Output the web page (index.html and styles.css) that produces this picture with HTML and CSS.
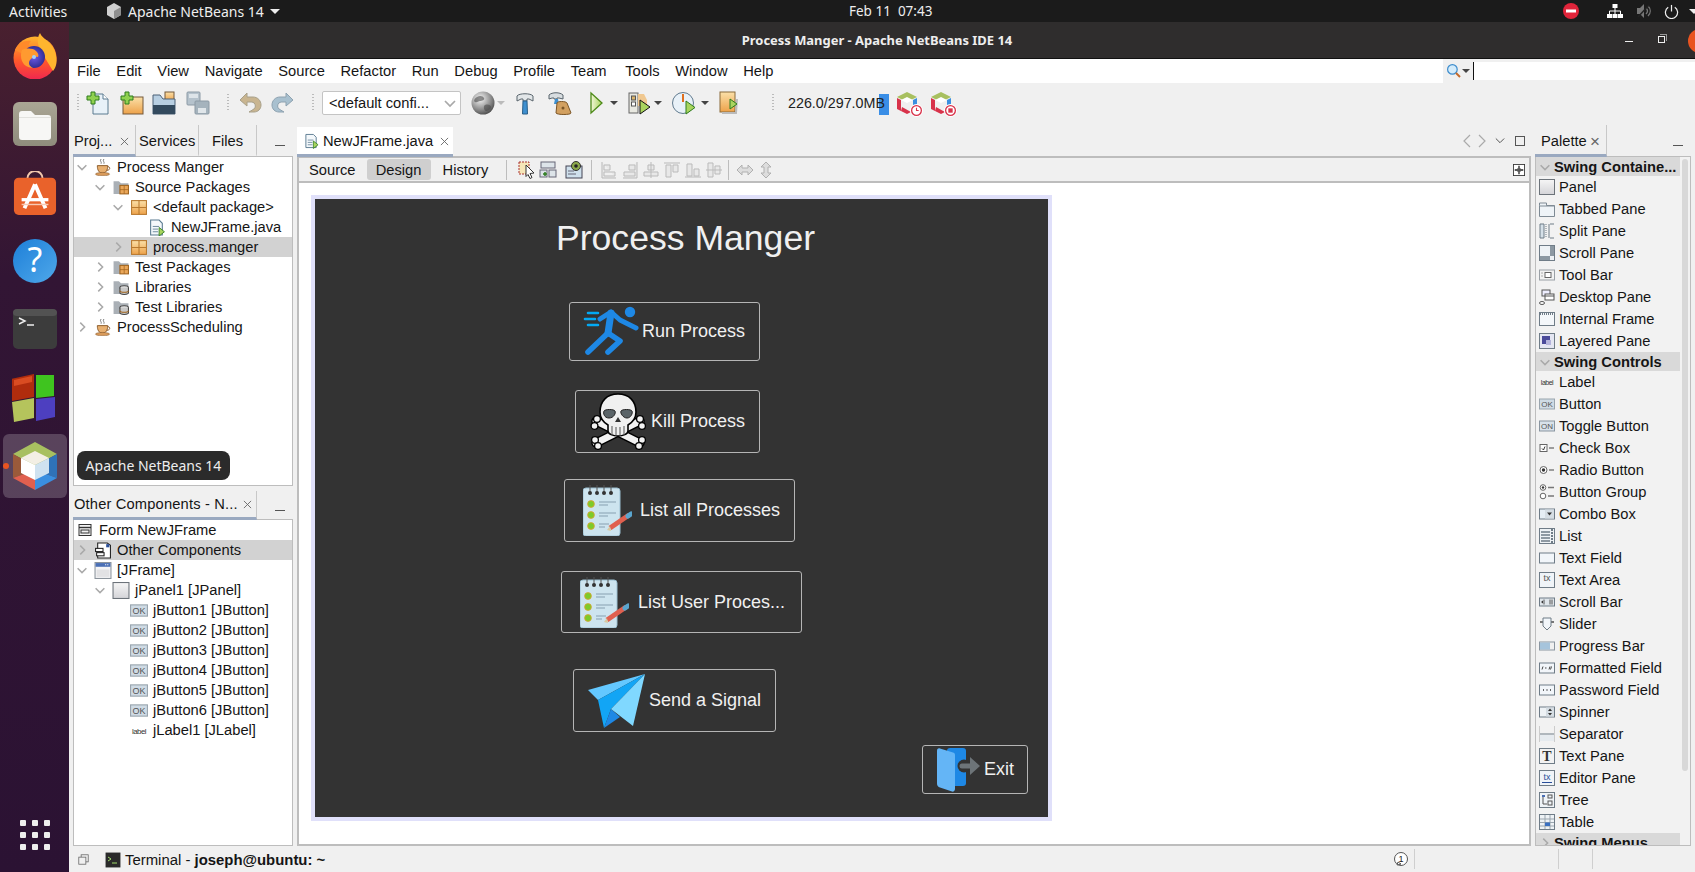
FILE: index.html
```html
<!DOCTYPE html>
<html lang="en">
<head>
<meta charset="utf-8">
<title>Process Manger - Apache NetBeans IDE 14</title>
<link rel="stylesheet" href="styles.css">
</head>
<body>
<svg class="sprite" aria-hidden="true">
<defs>
<linearGradient id="gFox" x1="0" y1="0" x2="0" y2="1"><stop offset="0" stop-color="#ffb52e"/><stop offset=".55" stop-color="#ff5a2a"/><stop offset="1" stop-color="#f0274f"/></linearGradient>
<radialGradient id="gFoxB" cx=".5" cy=".5" r=".55"><stop offset="0" stop-color="#6f5be8"/><stop offset="1" stop-color="#2c2a8c"/></radialGradient>
<linearGradient id="gFiles" x1="0" y1="0" x2="0" y2="1"><stop offset="0" stop-color="#aaa695"/><stop offset="1" stop-color="#8f8c7c"/></linearGradient>
<linearGradient id="gHelp" x1="0" y1="0" x2="1" y2="1"><stop offset="0" stop-color="#1d7fd8"/><stop offset="1" stop-color="#4fa8ea"/></linearGradient>
<linearGradient id="gOrange" x1="0" y1="0" x2="0" y2="1"><stop offset="0" stop-color="#fbe0a8"/><stop offset="1" stop-color="#eda24a"/></linearGradient>
<radialGradient id="gGlobe" cx=".38" cy=".32" r=".8"><stop offset="0" stop-color="#f6f6f6"/><stop offset=".6" stop-color="#8a8a8a"/><stop offset="1" stop-color="#3a3a3a"/></radialGradient>
<linearGradient id="gPanel" x1="0" y1="0" x2="0" y2="1"><stop offset="0" stop-color="#f6f6f6"/><stop offset="1" stop-color="#d4d4d8"/></linearGradient>
<linearGradient id="gRunF" x1="0" y1="0" x2="1" y2="0"><stop offset="0" stop-color="#f2f6d8"/><stop offset="1" stop-color="#a9d45e"/></linearGradient>
<symbol id="i-firefox" viewBox="0 0 46 46"><circle cx="23" cy="25" r="21.500" fill="url(#gFox)"/><path d="M28 0c2 6 14 10 16 22 2 8-1 14-3 16L30 20C26 14 24 6 28 0z" fill="#ffb52e"/><path d="M3 17c3-7 10-10 16-9-2 2-3 4-2 6l-8 6z" fill="#ff8a2a"/><circle cx="22" cy="24" r="11" fill="url(#gFoxB)"/><path d="M10 17c4-2 11-2 14 1 2 2 3 4 2 6-3-1-6 0-8 3-2 3-1 6 3 8-7 0-12-5-12-12 0-2 0-4 1-6z" fill="#ff9a30"/><circle cx="22" cy="24" r="2" fill="#9fd0ff"/></symbol>
<symbol id="i-files" viewBox="0 0 44 44"><rect width="44" height="44" rx="6" fill="url(#gFiles)"/><path d="M6 12a3 3 0 0 1 3-3h9l4 4h13a3 3 0 0 1 3 3v19a3 3 0 0 1-3 3H9a3 3 0 0 1-3-3z" fill="#f7f7f5"/><path d="M6 15h32v1H6z" fill="#e2e2de"/></symbol>
<symbol id="i-soft" viewBox="0 0 44 46"><path d="M14 12V8a8 8 0 0 1 16 0v4" fill="none" stroke="#f2c8ad" stroke-width="2"/><rect y="7" width="44" height="39" rx="5" fill="#e9622b"/><path d="M22 14 11 39M22 14l11 25" stroke="#fff" stroke-width="4" fill="none"/><path d="M8 30h28" stroke="#fff" stroke-width="3.400"/><path d="M8 35h28" stroke="#f7c9b4" stroke-width="1.500"/></symbol>
<symbol id="i-help" viewBox="0 0 44 44"><circle cx="22" cy="22" r="22" fill="url(#gHelp)"/><text x="22" y="33" text-anchor="middle" class="svg-q">?</text></symbol>
<symbol id="i-term" viewBox="0 0 44 40"><rect width="44" height="40" rx="5" fill="#3c3c3c"/><rect width="44" height="7" rx="4" fill="#525252"/><path d="M6 9l6 3-6 3" fill="none" stroke="#eee" stroke-width="1.500"/><path d="M14 16h7" stroke="#eee" stroke-width="1.500"/></symbol>
<symbol id="i-rubik" viewBox="2 0 46 48"><path d="M1 5 24 0v23L2 27z" fill="#b02c0d"/><path d="M4 6 22 2v6L4 12z" fill="#d94c22"/><path d="M26 1h18v21l-18 2z" fill="#3fc41f"/><path d="M2 28l22-4v20L4 48z" fill="#b5c45c"/><path d="M26 25l19-2v20l-19 4z" fill="#4d3fc0"/></symbol>
<symbol id="i-nb" viewBox="0 0 46 48"><path d="M23 0l22 12-22 12L1 12z" fill="#a8c060"/><path d="M1 12l22 12v4L1 36z" fill="#9a5a3a"/><path d="M45 12 23 24v4l22 8z" fill="#2f72b8"/><path d="M1 36l22-8v20z" fill="#e0604f"/><path d="M45 36l-22-8v20z" fill="#3a8fe0"/><path d="M23 9l14 7-14 7-14-7z" fill="#f3efe4"/><path d="M9 16l14 7v15L9 31z" fill="#fff"/><path d="M37 16 23 23v15l14-7z" fill="#cfe2f0"/></symbol>
<symbol id="i-nbsmall" viewBox="0 0 24 24"><path d="M11 1l10 5-10 5L1 6z" fill="#a8c060"/><path d="M1 7v11l4 2V9z" fill="#d8324a"/><path d="M21 7v7h-4V9z" fill="#3a8fe0"/><path d="M5 20l6 3 4-2-9-5z" fill="#d8324a"/><path d="M5 9l6 3 6-3-6-3z" fill="#fff"/></symbol>
<symbol id="i-new" viewBox="0 0 24 24"><path d="M7 3h10l5 5v15H7z" fill="#e8f1f8" stroke="#5a7a90"/><path d="M17 3v5h5" fill="#fff" stroke="#5a7a90"/><path d="M1 5h4V1h4v4h4v4H9v4H5V9H1z" fill="#8fd14f" stroke="#2f7d1f"/></symbol>
<symbol id="i-newp" viewBox="0 0 24 24"><rect x="3" y="6" width="20" height="17" fill="url(#gOrange)" stroke="#74593a"/><path d="M1 5h4V1h4v4h4v4H9v4H5V9H1z" fill="#8fd14f" stroke="#2f7d1f"/></symbol>
<symbol id="i-open" viewBox="0 0 24 24"><rect x="13" y="1" width="9" height="9" fill="url(#gOrange)" stroke="#74593a"/><path d="M1 4h7l3 4h12v15H1z" fill="#b8cfe2" stroke="#4a6177"/><path d="M1 14h22v9H1z" fill="#334a5e"/></symbol>
<symbol id="i-save" viewBox="0 0 24 24"><rect x="1" y="1" width="13" height="13" rx="1" fill="#b5c2cc" stroke="#8c9aa5"/><rect x="3" y="3" width="9" height="4" fill="#dde4e9"/><rect x="9" y="10" width="14" height="13" rx="1" fill="#a5b3bd" stroke="#8c9aa5"/><rect x="12" y="17" width="8" height="5" fill="#e0e6ea"/></symbol>
<symbol id="i-undo" viewBox="0 0 24 24"><path d="M9 2 2 9l7 6v-4h5a4 4 0 0 1 2 7l-5 3h5c4 0 7-3 7-7s-3-8-8-8H9z" fill="#c9b590" stroke="#a8a08a"/></symbol>
<symbol id="i-redo" viewBox="0 0 24 24"><path d="M15 2l7 7-7 6v-4h-5a4 4 0 0 0-2 7l5 3H8c-4 0-7-3-7-7s3-8 8-8h6z" fill="#a8c0cf" stroke="#8ea2b0"/></symbol>
<symbol id="i-globe" viewBox="0 0 24 24"><circle cx="12" cy="12" r="11.500" fill="url(#gGlobe)"/><path d="M6 6c3-2 6-1 7 1s-2 3-4 3-3 2-5 1 0-4 2-5zM14 14c3-1 6 0 6 2s-3 4-5 4-3-5-1-6z" fill="#4a4a4a" opacity=".6"/></symbol>
<symbol id="i-hammer" viewBox="0 0 24 24"><path d="M4 5c2-3 14-3 16 0v5l-4-2h-2v2h-4V8H8l-4 2z" fill="#e2e6e8" stroke="#59646c"/><path d="M10 10h4l.5 13h-5z" fill="#3f90d0" stroke="#2a5f88"/></symbol>
<symbol id="i-clean" viewBox="0 0 24 24"><path d="M1 4c3-3 11-3 14 0v4l-4-1H9v1H6V7H4L1 8z" fill="#d8dde0" stroke="#59646c"/><path d="M7 8h3l1 5H6z" fill="#3f90d0"/><path d="M9 12c0-2 9-2 10 0l4 10c0 2-14 2-15 0z" fill="#d2a060" stroke="#7b5526"/><circle cx="15" cy="17" r="1.500" fill="#7b5526"/></symbol>
<symbol id="i-run" viewBox="0 0 24 24"><path d="M7 2l11 10L7 22z" fill="url(#gRunF)" stroke="#4d8a18" stroke-width="1.300"/></symbol>
<symbol id="i-debug" viewBox="0 0 24 24"><rect x="1" y="2" width="9" height="20" fill="#e8e8e0" stroke="#666"/><rect x="3.500" y="5" width="4" height="4" fill="#d9b36a" stroke="#555"/><rect x="3.500" y="11" width="4" height="4" fill="#fff" stroke="#555"/><path d="M10 3h6l3 6v6h-9z" fill="#f0c890"/><path d="M12 9l10 7-10 7z" fill="#a9d45e" stroke="#111"/></symbol>
<symbol id="i-prof" viewBox="0 0 24 24"><circle cx="11" cy="12" r="10.500" fill="#e8f1f8" stroke="#607a8e"/><path d="M11 3v8" stroke="#e07020" stroke-width="2"/><path d="M14 10l9 6.500-9 6.500z" fill="#a9d45e" stroke="#2f7d1f"/></symbol>
<symbol id="i-fix" viewBox="0 0 24 24"><rect x="2" y="1" width="15" height="20" fill="url(#gOrange)" stroke="#8a6a3a"/><path d="M4 22h14l1-14" fill="none" stroke="#bbb" stroke-width="2"/><path d="M12 8l7 5-7 5z" fill="#a9d45e" stroke="#2f7d1f"/></symbol>
<symbol id="i-clock" viewBox="0 0 12 12"><circle cx="6" cy="6" r="6" fill="#fff"/><circle cx="6" cy="6" r="4.500" fill="none" stroke="#d8324a" stroke-width="1.200"/><path d="M6 3.500V6h2" fill="none" stroke="#d8324a"/></symbol>
<symbol id="i-stop" viewBox="0 0 12 12"><circle cx="6" cy="6" r="6" fill="#fff"/><circle cx="6" cy="6" r="4.500" fill="none" stroke="#d8324a" stroke-width="1.200"/><rect x="4" y="4" width="4" height="4" fill="#d8324a"/></symbol>
<symbol id="i-search" viewBox="0 0 20 20"><circle cx="8" cy="8" r="6" fill="#d4ecfb" stroke="#3d8ccc" stroke-width="1.500"/><path d="M12.500 12.500l5 5" stroke="#c46a2a" stroke-width="2.400"/></symbol>
<symbol id="i-x" viewBox="0 0 10 10"><path d="M1 1l8 8M9 1 1 9" stroke="#666" stroke-width="1" fill="none"/></symbol>
<symbol id="i-down" viewBox="0 0 16 16"><path d="M3 6l5 5 5-5" fill="none" stroke="#a9a9a9" stroke-width="1.700"/></symbol>
<symbol id="i-right" viewBox="0 0 16 16"><path d="M6 3l5 5-5 5" fill="none" stroke="#a9a9a9" stroke-width="1.700"/></symbol>
<symbol id="i-cup" viewBox="0 0 18 18"><path d="M7 0c-2 2 1 3 0 5M10 0c-2 2 1 3 0 5" stroke="#777" fill="none"/><path d="M3 7h11c0 5-2 8-5.500 8S3 12 3 7z" fill="#e8b070" stroke="#8a5a2a"/><path d="M14 8c3 0 3 4-1 4" fill="none" stroke="#8a5a2a"/><ellipse cx="8.500" cy="16" rx="7.500" ry="1.800" fill="#d89a5a" stroke="#8a5a2a" stroke-width=".6"/></symbol>
<symbol id="i-srcpk" viewBox="0 0 16 16"><path d="M1 2h5l2 2h7v2H8v8H1z" fill="#aab0b6"/><rect x="7" y="6" width="8" height="8" fill="#eaa75a" stroke="#a0641e"/><path d="M7 10h8M11 6v8" stroke="#a0641e" stroke-width=".7"/></symbol>
<symbol id="i-lib" viewBox="0 0 16 16"><path d="M1 2h5l2 2h7v3H8v7H1z" fill="#aab0b6"/><ellipse cx="11" cy="8" rx="4" ry="1.600" fill="#e8e8e8" stroke="#444"/><path d="M7 8v5c0 2 8 2 8 0V8" fill="#c8c8c8" stroke="#444"/><path d="M7 11c0 2 8 2 8 0" fill="none" stroke="#a0641e"/></symbol>
<symbol id="i-pkg" viewBox="0 0 16 16"><rect x="1" y="1.500" width="14" height="13" fill="url(#gOrange)" stroke="#b87a30"/><path d="M1 8h14M8 1.500v13" stroke="#b87a30"/></symbol>
<symbol id="i-java" viewBox="0 0 16 16"><path d="M2 1h8l3 3v11H2z" fill="#f4f8fb" stroke="#5a7a90"/><path d="M4 7h6M4 9.500h5M4 12h5" stroke="#5a7a90" stroke-width=".8"/><path d="M10 8l5 4-5 4z" fill="#a9d45e" stroke="#2f7d1f" stroke-width=".8"/></symbol>
<symbol id="i-form" viewBox="0 0 16 16"><rect x="2" y="2.500" width="12" height="11" fill="#f2f2f2" stroke="#333"/><path d="M2 5.500h12" stroke="#333" stroke-width="1.400"/><rect x="4" y="8" width="8" height="3" fill="none" stroke="#333"/></symbol>
<symbol id="i-other" viewBox="0 0 16 16"><path d="M3 1h9l3 2v12H3z" fill="#fff" stroke="#222"/><rect x="11" y="2" width="3" height="3" fill="#2a4f9a"/><rect x="1" y="6" width="7" height="3" fill="#fff" stroke="#222"/><rect x="2" y="10" width="7" height="3" fill="#fff" stroke="#222"/></symbol>
<symbol id="i-frame" viewBox="0 0 16 16"><rect x=".5" y=".5" width="15" height="15" fill="#f4f4f6" stroke="#8b939b"/><rect x="1" y="1" width="14" height="3.500" fill="#4a6fb5"/><path d="M10 2.500h4" stroke="#fff" stroke-dasharray="1 1"/><rect x="2" y="7" width="12" height="7" fill="#e2e2e4"/></symbol>
<symbol id="i-panel" viewBox="0 0 16 16"><rect x=".5" y=".5" width="15" height="15" fill="url(#gPanel)" stroke="#6c737a"/></symbol>
<symbol id="i-ok" viewBox="0 0 16 11"><rect x=".5" y=".5" width="15" height="10" fill="#cfdbe5" stroke="#9aa5ae"/><text x="8" y="8.500" text-anchor="middle" class="svg-ok">OK</text></symbol>
<symbol id="i-on" viewBox="0 0 16 11"><rect x=".5" y=".5" width="15" height="10" fill="#d8e2ea" stroke="#8a95a0"/><text x="8" y="8.500" text-anchor="middle" class="svg-ok">ON</text></symbol>
<symbol id="i-label" viewBox="0 0 16 11"><text x="8" y="8.500" text-anchor="middle" class="svg-lab">label</text></symbol>
<symbol id="i-tabbed" viewBox="0 0 16 16"><path d="M.5 4.500V2h7v2.500h8v11H.5z" fill="#eef3f7" stroke="#7e8a94"/><path d="M.5 5h15" stroke="#7e8a94"/></symbol>
<symbol id="i-split" viewBox="0 0 16 16"><path d="M1 1h4v14H1zM11 1h4M11 15h4M10 1v14" fill="#d5e0e8" stroke="#6f7c87"/><path d="M7 1v14" stroke="#6f7c87" stroke-dasharray="1 1"/></symbol>
<symbol id="i-scroll" viewBox="0 0 16 16"><rect x=".5" y=".5" width="15" height="15" fill="#eef2f5" stroke="#6f7c87"/><rect x="1" y="11" width="10" height="4" fill="#8c98a2"/><rect x="11" y="1" width="4" height="10" fill="#8c98a2"/></symbol>
<symbol id="i-toolb" viewBox="0 0 16 11"><rect x=".5" y=".5" width="15" height="10" fill="#f2f2f2" stroke="#9aa0a6"/><rect x="6" y="3" width="6" height="5" fill="#fff" stroke="#666"/><path d="M3 3v1M3 6v1" stroke="#666"/></symbol>
<symbol id="i-desk" viewBox="0 0 16 16"><rect x="3" y="1" width="8" height="6" fill="#eef" stroke="#555"/><rect x="6" y="5" width="9" height="6" fill="#fff" stroke="#555"/><path d="M6 7h9" stroke="#555"/><ellipse cx="3" cy="14" rx="2.500" ry="1.500" fill="#fff" stroke="#555"/></symbol>
<symbol id="i-iframe" viewBox="0 0 16 16"><rect x=".5" y="1.500" width="15" height="13" fill="#f4f7fa" stroke="#6f7c87"/><path d="M1 3h14" stroke="#6f7c87" stroke-width="2" stroke-dasharray="1 1"/></symbol>
<symbol id="i-layer" viewBox="0 0 16 16"><rect x=".5" y=".5" width="15" height="15" fill="#e4e6f2" stroke="#6f7c87"/><rect x="3" y="3" width="8" height="8" fill="#4a4a9a"/><rect x="7" y="7" width="5" height="5" fill="#b4b4dc"/></symbol>
<symbol id="i-check" viewBox="0 0 16 11"><rect x="1" y="2" width="7" height="7" fill="#fff" stroke="#666"/><path d="M3 6l1.500 1.500L6 4" fill="none" stroke="#333"/><path d="M10 5.500h5" stroke="#777" stroke-width="1.400"/></symbol>
<symbol id="i-radio" viewBox="0 0 16 11"><circle cx="4.500" cy="5.500" r="3.500" fill="#fff" stroke="#666"/><circle cx="4.500" cy="5.500" r="1.700" fill="#333"/><path d="M10 5.500h5" stroke="#777" stroke-width="1.400"/></symbol>
<symbol id="i-group" viewBox="0 0 16 16"><circle cx="4" cy="3.500" r="2.800" fill="#fff" stroke="#666"/><circle cx="4" cy="3.500" r="1.200" fill="#333"/><circle cx="4" cy="12" r="2.800" fill="#fff" stroke="#666"/><path d="M9 3.500h6M9 12h6" stroke="#777" stroke-width="1.400"/></symbol>
<symbol id="i-combo" viewBox="0 0 16 11"><rect x=".5" y=".5" width="15" height="10" fill="#e6eef4" stroke="#6f7c87"/><rect x="6" y="1" width="9" height="9" fill="#d5dde3"/><path d="M8 4h5l-2.500 3z" fill="#333"/></symbol>
<symbol id="i-list" viewBox="0 0 16 16"><rect x=".5" y=".5" width="15" height="15" fill="#eef2f5" stroke="#6f7c87"/><path d="M2 4h9M2 7h9M2 10h9M2 13h9" stroke="#6f7c87" stroke-width="1.300"/><path d="M13 1v14" stroke="#6f7c87" stroke-width="2" stroke-dasharray="2 1"/></symbol>
<symbol id="i-tf" viewBox="0 0 16 11"><rect x=".5" y=".5" width="15" height="10" fill="#f2f6fa" stroke="#6f7c87"/></symbol>
<symbol id="i-ta" viewBox="0 0 16 16"><rect x=".5" y=".5" width="15" height="15" fill="#f0f4f8" stroke="#6f7c87"/><text x="8" y="9" text-anchor="middle" class="svg-tx">tx</text></symbol>
<symbol id="i-sbar" viewBox="0 0 16 11"><rect x=".5" y="1.500" width="15" height="8" fill="#dfe5ea" stroke="#6f7c87"/><path d="M5 3v5M11 3v5M13 3v5" stroke="#555"/><path d="M4 4v3L2 5.500z" fill="#333"/></symbol>
<symbol id="i-slider" viewBox="0 0 16 16"><path d="M1 6h3M12 6h3" stroke="#777" stroke-width="2"/><path d="M4 2h8v8l-4 4-4-4z" fill="#f2f6fa" stroke="#6f7c87"/></symbol>
<symbol id="i-pbar" viewBox="0 0 16 11"><rect x=".5" y="1.500" width="15" height="8" fill="#f0f0f0" stroke="#8a95a0"/><rect x="1" y="2" width="10" height="7" fill="#a6c4dc"/></symbol>
<symbol id="i-fmt" viewBox="0 0 16 11"><rect x=".5" y=".5" width="15" height="10" fill="#f2f6fa" stroke="#6f7c87"/><path d="M3 7l1-3M6 5.500h1.500M10 7l1-3M11.500 7l1-3" stroke="#444"/></symbol>
<symbol id="i-pwd" viewBox="0 0 16 11"><rect x=".5" y=".5" width="15" height="10" fill="#f2f6fa" stroke="#6f7c87"/><path d="M4 5.500h1M7.500 5.500h1M11 5.500h1" stroke="#333" stroke-width="1.400"/></symbol>
<symbol id="i-spin" viewBox="0 0 16 11"><rect x=".5" y=".5" width="15" height="10" fill="#eef2f5" stroke="#6f7c87"/><rect x="7" y="1" width="8" height="9" fill="#d5dde3"/><path d="M9 4.500h4L11 2zM9 6.500h4L11 9z" fill="#333"/></symbol>
<symbol id="i-sep" viewBox="0 0 16 16"><rect y="1" width="16" height="7" fill="#f2f2f2"/><rect y="9" width="16" height="6" fill="#e6ebef"/><path d="M0 8h16" stroke="#6f7c87"/><path d="M.5 0v16M15.500 0v16" stroke="#ccc"/></symbol>
<symbol id="i-tp" viewBox="0 0 16 16"><rect x=".5" y=".5" width="15" height="15" fill="#f2f2f2" stroke="#6f7c87"/><text x="8" y="13" text-anchor="middle" class="svg-t">T</text></symbol>
<symbol id="i-ep" viewBox="0 0 16 16"><rect x=".5" y=".5" width="15" height="15" fill="#f0f4f8" stroke="#6f7c87"/><text x="8" y="10" text-anchor="middle" class="svg-tx svg-blue">tx</text><path d="M3 12.500h10" stroke="#2a4f9a"/></symbol>
<symbol id="i-tree" viewBox="0 0 16 16"><rect x=".5" y=".5" width="15" height="15" fill="#f0f4f8" stroke="#6f7c87"/><rect x="3" y="3" width="3" height="2" fill="#4a6fb5"/><rect x="9" y="3" width="4" height="3" fill="none" stroke="#555"/><path d="M4 5v7h4" fill="none" stroke="#555"/><rect x="9" y="9" width="4" height="4" fill="none" stroke="#555"/></symbol>
<symbol id="i-table" viewBox="0 0 16 16"><rect x=".5" y=".5" width="15" height="15" fill="#eef2f5" stroke="#6f7c87"/><path d="M1 5h14M1 8.500h14M1 12h14M6 1v14M11 1v14" stroke="#9aa5ae"/><rect x="6" y="8.500" width="5" height="3.500" fill="#3a70c0"/></symbol>
<symbol id="i-run-man" viewBox="0 0 56 52"><g fill="none" stroke-linecap="round" stroke-linejoin="round"><path d="M5 7h10M2 13h10M5 19h10" stroke="#03a9f4" stroke-width="2.600"/><path d="M17 13l11-7 9 8 16 8" stroke="#1e88e5" stroke-width="5"/><path d="M28 7l-3 20" stroke="#1e88e5" stroke-width="7"/><path d="M5 46l20-19 12 8-12 11" stroke="#1e88e5" stroke-width="5.600"/></g><circle cx="47" cy="6" r="5.200" fill="#1e88e5"/></symbol>
<symbol id="i-skull" viewBox="0 0 57 57"><g stroke-linecap="round"><path d="M6 28 50 50M50 28 6 50" stroke="#000" stroke-width="9.500"/><path d="M6 28 50 50M50 28 6 50" stroke="#f2f2f2" stroke-width="6.500"/><g fill="#f2f2f2" stroke="#000" stroke-width="1.300"><circle cx="4.500" cy="33" r="3.400"/><circle cx="7" cy="26" r="3.400"/><circle cx="52" cy="33" r="3.400"/><circle cx="50" cy="26" r="3.400"/><circle cx="5" cy="47" r="3.400"/><circle cx="8" cy="53" r="3.400"/><circle cx="52" cy="47" r="3.400"/><circle cx="49" cy="53" r="3.400"/></g></g><path d="M28 1c-11 0-18 7-18 18 0 6 3 10 8 13v6c0 3 5 5 10 5s10-2 10-5v-6c5-3 8-7 8-13 0-11-7-18-18-18z" fill="#f0f0f0" stroke="#000" stroke-width="1.600"/><path d="M14 18c1-2 10-2 11 0s-1 7-6 7-6-5-5-7zM31 18c1-2 10-2 11 0s-1 7-5 7-7-5-6-7z" fill="#5b6468" stroke="#222"/><path d="M28 24l-3 5h6z" fill="#333"/><path d="M22 33v9M26 34v9M30 34v9M34 33v9" stroke="#555"/></symbol>
<symbol id="i-note" viewBox="0 0 49 51"><rect y="3" width="37" height="48" rx="3" fill="#cde4ef" stroke="#9cc0d2"/><path d="M7 0v8M14 0v8M21 0v8M28 0v8" stroke="#555" stroke-width="1"/><g fill="#333"><circle cx="7" cy="8" r="2"/><circle cx="14" cy="8" r="2"/><circle cx="21" cy="8" r="2"/><circle cx="28" cy="8" r="2"/></g><g fill="#7ccb2a" stroke="#e0a030" stroke-width=".8"><circle cx="8" cy="19" r="3.400"/><circle cx="8" cy="30" r="3.400"/><circle cx="8" cy="41" r="3.400"/></g><path d="M16 17h17M16 28h17M16 39h10" stroke="#9fb7c6" stroke-width="1.400"/><path d="M16 20h9M16 31h9M16 42h6" stroke="#9fb7c6" stroke-width="1.400"/><path d="M27 43 46 30" stroke="#e0604f" stroke-width="5"/><path d="M45 31l3-2" stroke="#5aa6cf" stroke-width="5" stroke-linecap="round"/><path d="M27 41l-3 4 4 1z" fill="#d8c8a0"/></symbol>
<symbol id="i-plane" viewBox="0 0 57 54"><path d="M57 0 0 16l10 10z" fill="#64c8ff"/><path d="M57 0 10 26l6 28 7-19z" fill="#12a5f5"/><path d="M23 35l-7 19 16-11z" fill="#1e88e5"/><path d="M57 0 23 35l22 17z" fill="#80d8ff"/></symbol>
<symbol id="i-exit" viewBox="0 0 43 44"><rect x="10" y="0" width="19" height="38" rx="3" fill="#1e88e5"/><path d="M0 3c0-2 1-3 3-2.500l13 4c2 .5 2 2 2 3V41c0 2-2 3-3 2.500l-12-4c-2-.5-3-2-3-4z" fill="#64b5f6"/><circle cx="27" cy="18" r="6.500" fill="#333"/><path d="M25 18h10" stroke="#6d7478" stroke-width="5" stroke-linecap="round"/><path d="M33 9l10 9-10 9z" fill="#6d7478"/></symbol>
</defs>
</svg>

<header class="topbar">
  <span class="activities">Activities</span>
  <svg class="app-hex" viewBox="0 0 14 16"><path d="M7 0l7 4v8l-7 4-7-4V4z" fill="#d0d0d0"/><path d="M7 8l7-4v8l-7 4z" fill="#8e8e8e"/></svg>
  <span class="appname">Apache NetBeans 14</span>
  <span class="caret-w"></span>
  <span class="clock">Feb 11&nbsp; 07:43</span>
  <svg class="tray-dnd" viewBox="0 0 16 16"><circle cx="8" cy="8" r="8" fill="#e0243a"/><rect x="3" y="6.500" width="10" height="3" fill="#fff"/></svg>
  <svg class="tray-net" viewBox="0 0 16 14"><g fill="#fff"><rect x="5.500" width="5" height="4"/><rect y="10" width="5" height="4"/><rect x="5.500" y="10" width="5" height="4"/><rect x="11" y="10" width="5" height="4"/></g><path d="M8 4v6M2.500 10V7h11v3" stroke="#fff" fill="none"/></svg>
  <svg class="tray-vol" viewBox="0 0 16 16"><path d="M1 5h3l4-4v14l-4-4H1z" fill="#777"/><path d="M10 5c2 2 2 4 0 6M12 3c3 3 3 7 0 10" fill="none" stroke="#777" stroke-width="1.300"/><path d="M2 14 13 2" stroke="#222" stroke-width="1.500"/></svg>
  <svg class="tray-pow" viewBox="0 0 16 16"><path d="M4.500 3.500a6.500 6.500 0 1 0 7 0" fill="none" stroke="#eee" stroke-width="1.300"/><path d="M8 1v7" stroke="#eee" stroke-width="1.300"/></svg>
  <span class="caret-w caret-end"></span>
</header>

<div class="desktop">
  <nav class="dock">
    <div class="dock-item"><svg class="dock-fox"><use href="#i-firefox"/></svg></div>
    <div class="dock-item"><svg class="dock-ico"><use href="#i-files"/></svg></div>
    <div class="dock-item"><svg class="dock-ico"><use href="#i-soft"/></svg></div>
    <div class="dock-item"><svg class="dock-ico"><use href="#i-help"/></svg></div>
    <div class="dock-item"><svg class="dock-ico dock-short"><use href="#i-term"/></svg></div>
    <div class="dock-item"><svg class="dock-ico dock-tall"><use href="#i-rubik"/></svg></div>
    <div class="dock-item dock-active"><span class="dock-dot"></span><svg class="dock-ico dock-tall"><use href="#i-nb"/></svg></div>
    <div class="dock-grid"><i></i><i></i><i></i><i></i><i></i><i></i><i></i><i></i><i></i></div>
  </nav>

  <div class="window">
    <div class="titlebar">
      <span class="wintitle">Process Manger - Apache NetBeans IDE 14</span>
      <span class="win-min"></span>
      <span class="win-max"></span>
      <span class="win-close"></span>
    </div>

    <div class="menubar">
      <span>File</span><span>Edit</span><span>View</span><span>Navigate</span><span>Source</span><span>Refactor</span><span>Run</span><span>Debug</span><span>Profile</span><span class="menu-team">Team</span><span>Tools</span><span>Window</span><span>Help</span>
      <div class="searchbox"><svg class="search-ico"><use href="#i-search"/></svg><span class="caret-d"></span><div class="search-input"></div></div>
    </div>

    <div class="toolbar">
      <span class="grip m7"></span>
      <svg class="tb m10"><use href="#i-new"/></svg>
      <svg class="tb m8"><use href="#i-newp"/></svg>
      <svg class="tb m10"><use href="#i-open"/></svg>
      <svg class="tb m17"><use href="#i-save"/></svg>
      <span class="grip m9"></span>
      <svg class="tb m9"><use href="#i-undo"/></svg>
      <svg class="tb m17"><use href="#i-redo"/></svg>
      <span class="grip m8"></span>
      <div class="combo m10"><span>&lt;default confi...</span><svg class="combo-arrow"><use href="#i-down"/></svg></div>
      <svg class="tb"><use href="#i-globe"/></svg>
      <span class="caret-d caret-light l2 m8"></span>
      <svg class="tb m11"><use href="#i-hammer"/></svg>
      <svg class="tb m12"><use href="#i-clean"/></svg>
      <svg class="tb"><use href="#i-run"/></svg>
      <span class="caret-d l2 m10"></span>
      <svg class="tb"><use href="#i-debug"/></svg>
      <span class="caret-d l2 m10"></span>
      <svg class="tb"><use href="#i-prof"/></svg>
      <span class="caret-d l5 m9"></span>
      <svg class="tb m30"><use href="#i-fix"/></svg>
      <span class="grip m14"></span>
      <div class="memory m7"><span class="mem-bar"></span><span class="mem-text">226.0/297.0MB</span></div>
      <div class="nbprof m10"><svg class="tb"><use href="#i-nbsmall"/></svg><svg class="nbbadge"><use href="#i-clock"/></svg></div>
      <div class="nbprof"><svg class="tb"><use href="#i-nbsmall"/></svg><svg class="nbbadge"><use href="#i-stop"/></svg></div>
    </div>

    <div class="workspace">
      <aside class="leftcol">
        <div class="tabstrip">
          <div class="tab sel tab-proj">Proj...<svg class="x"><use href="#i-x"/></svg></div>
          <div class="tab tab-serv">Services</div>
          <div class="tab tab-files">Files</div>
          <span class="minimize"></span>
        </div>
        <div class="treebox tree-top">
          <div class="row"><svg class="chev"><use href="#i-down"/></svg><svg class="ico"><use href="#i-cup"/></svg>Process Manger</div>
          <div class="row l-1"><svg class="chev"><use href="#i-down"/></svg><svg class="ico"><use href="#i-srcpk"/></svg>Source Packages</div>
          <div class="row l-2"><svg class="chev"><use href="#i-down"/></svg><svg class="ico"><use href="#i-pkg"/></svg>&lt;default package&gt;</div>
          <div class="row l-3"><span class="chev"></span><svg class="ico"><use href="#i-java"/></svg>NewJFrame.java</div>
          <div class="row l-2 hl"><svg class="chev"><use href="#i-right"/></svg><svg class="ico"><use href="#i-pkg"/></svg>process.manger</div>
          <div class="row l-1"><svg class="chev"><use href="#i-right"/></svg><svg class="ico"><use href="#i-srcpk"/></svg>Test Packages</div>
          <div class="row l-1"><svg class="chev"><use href="#i-right"/></svg><svg class="ico"><use href="#i-lib"/></svg>Libraries</div>
          <div class="row l-1"><svg class="chev"><use href="#i-right"/></svg><svg class="ico"><use href="#i-lib"/></svg>Test Libraries</div>
          <div class="row"><svg class="chev"><use href="#i-right"/></svg><svg class="ico"><use href="#i-cup"/></svg>ProcessScheduling</div>
          <div class="tooltip">Apache NetBeans 14</div>
        </div>
        <div class="tabstrip strip-low">
          <div class="tab sel tab-other"><span class="other-label">Other Components - N...</span><svg class="x"><use href="#i-x"/></svg></div>
          <span class="minimize"></span>
        </div>
        <div class="treebox tree-bottom">
          <div class="row row-form"><svg class="ico ico-form"><use href="#i-form"/></svg>Form NewJFrame</div>
          <div class="row hl"><svg class="chev"><use href="#i-right"/></svg><svg class="ico"><use href="#i-other"/></svg>Other Components</div>
          <div class="row"><svg class="chev"><use href="#i-down"/></svg><svg class="ico"><use href="#i-frame"/></svg>[JFrame]</div>
          <div class="row l-1"><svg class="chev"><use href="#i-down"/></svg><svg class="ico"><use href="#i-panel"/></svg>jPanel1 [JPanel]</div>
          <div class="row l-2"><span class="chev"></span><svg class="ico"><use href="#i-ok"/></svg>jButton1 [JButton]</div>
          <div class="row l-2"><span class="chev"></span><svg class="ico"><use href="#i-ok"/></svg>jButton2 [JButton]</div>
          <div class="row l-2"><span class="chev"></span><svg class="ico"><use href="#i-ok"/></svg>jButton3 [JButton]</div>
          <div class="row l-2"><span class="chev"></span><svg class="ico"><use href="#i-ok"/></svg>jButton4 [JButton]</div>
          <div class="row l-2"><span class="chev"></span><svg class="ico"><use href="#i-ok"/></svg>jButton5 [JButton]</div>
          <div class="row l-2"><span class="chev"></span><svg class="ico"><use href="#i-ok"/></svg>jButton6 [JButton]</div>
          <div class="row l-2"><span class="chev"></span><svg class="ico"><use href="#i-label"/></svg>jLabel1 [JLabel]</div>
        </div>
      </aside>

      <main class="centercol">
        <div class="tabstrip strip-center">
          <div class="tab sel tab-editor"><svg class="ico-tab"><use href="#i-java"/></svg>NewJFrame.java<svg class="x"><use href="#i-x"/></svg></div>
          <div class="tabnav">
            <svg class="nav-s" viewBox="0 0 10 14"><path d="M8 1 2 7l6 6" fill="none" stroke="#aaa" stroke-width="1.200"/></svg>
            <svg class="nav-s nav-r" viewBox="0 0 10 14"><path d="M2 1l6 6-6 6" fill="none" stroke="#aaa" stroke-width="1.200"/></svg>
            <svg class="nav-s nav-v" viewBox="0 0 12 14"><path d="M1 4l5 5 5-5" fill="none" stroke="#555" stroke-width="1.200"/></svg>
            <span class="nav-box"></span>
          </div>
        </div>
        <div class="editor">
          <div class="edit-bar">
            <span class="view v-source">Source</span>
            <span class="view v-design">Design</span>
            <span class="view v-history">History</span>
            <span class="ebsep"></span>
            <svg class="ebi" viewBox="0 0 18 18"><rect x="1" y="1" width="10" height="12" fill="#f6e6b8" stroke="#a33" stroke-dasharray="2 1"/><path d="M8 4l8 8-4 .5 2 4-2 1-2-4-2 2z" fill="#fff" stroke="#333"/></svg>
            <svg class="ebi" viewBox="0 0 18 18"><rect x="2" y="1" width="14" height="6" fill="#dde4e9" stroke="#667"/><rect x="1" y="9" width="7" height="7" fill="#dde4e9" stroke="#667"/><rect x="10" y="9" width="7" height="7" fill="#dde4e9" stroke="#667"/><path d="M6 11v4M4 13h4" stroke="#2f7d1f" stroke-width="1.500"/></svg>
            <svg class="ebi ebi-gap" viewBox="0 0 18 18"><rect x="1" y="5" width="16" height="12" fill="#cfe0ec" stroke="#445"/><path d="M3 10h6M3 13h8" stroke="#667"/><circle cx="11" cy="5" r="4.500" fill="#8ba84a" stroke="#333"/><circle cx="11" cy="5" r="1.800" fill="#222"/></svg>
            <span class="ebsep sep2"></span>
            <svg class="ebi dim" viewBox="0 0 18 18"><path d="M2 1v16h14M4 4h6v5H4zM4 11h11v4H4z" fill="#e8e8e8" stroke="#b5b5b5"/></svg>
            <svg class="ebi dim" viewBox="0 0 18 18"><path d="M16 1v16H2M8 4h6v5H8zM3 11h11v4H3z" fill="#e8e8e8" stroke="#b5b5b5"/></svg>
            <svg class="ebi dim" viewBox="0 0 18 18"><path d="M9 1v16M6 4h6v5H6zM2 11h14v4H2z" fill="#e8e8e8" stroke="#b5b5b5"/></svg>
            <svg class="ebi dim" viewBox="0 0 18 18"><path d="M1 2h16M3 4h5v12H3zM10 4h5v7h-5z" fill="#e8e8e8" stroke="#b5b5b5"/></svg>
            <svg class="ebi dim" viewBox="0 0 18 18"><path d="M1 16h16M3 3h5v12H3zM10 8h5v7h-5z" fill="#e8e8e8" stroke="#b5b5b5"/></svg>
            <svg class="ebi dim ebi-gap2" viewBox="0 0 18 18"><path d="M1 9h16M3 2h5v14H3zM10 5h5v8h-5z" fill="#e8e8e8" stroke="#b5b5b5"/></svg>
            <span class="ebsep sep3"></span>
            <svg class="ebi dim" viewBox="0 0 18 18"><path d="M1 9l5-5v3h6V4l5 5-5 5v-3H6v3z" fill="#dcdcdc" stroke="#aaa"/></svg>
            <svg class="ebi dim" viewBox="0 0 18 18"><path d="M9 1l5 5h-3v6h3l-5 5-5-5h3V6H4z" fill="#dcdcdc" stroke="#aaa"/></svg>
            <svg class="ebi ebi-last" viewBox="0 0 14 14"><rect x=".5" y=".5" width="13" height="13" fill="#fff" stroke="#333"/><path d="M7 2v10M2 7h10" stroke="#222" stroke-width="1.500"/><path d="M5 5h4v4H5z" fill="#555"/></svg>
          </div>
          <div class="canvas">
            <div class="form">
              <div class="form-inner">
                <div class="form-title">Process Manger</div>
                <div class="fbtn b-run"><svg class="fi fi-run"><use href="#i-run-man"/></svg>Run Process</div>
                <div class="fbtn b-kill"><svg class="fi fi-skull"><use href="#i-skull"/></svg>Kill Process</div>
                <div class="fbtn b-all"><svg class="fi fi-note"><use href="#i-note"/></svg>List all Processes</div>
                <div class="fbtn b-user"><svg class="fi fi-note fi-note2"><use href="#i-note"/></svg>List User Proces...</div>
                <div class="fbtn b-send"><svg class="fi fi-plane"><use href="#i-plane"/></svg>Send a Signal</div>
                <div class="fbtn b-exit"><svg class="fi fi-exit"><use href="#i-exit"/></svg>Exit</div>
              </div>
            </div>
          </div>
        </div>
      </main>

      <aside class="rightcol">
        <div class="tabstrip">
          <div class="tab sel tab-pal"><span class="pal-label">Palette</span><span class="pal-close">×</span></div>
          <span class="minimize"></span>
        </div>
        <div class="palette">
          <div class="palhead"><svg class="palchev"><use href="#i-down"/></svg>Swing Containe...</div>
          <div class="pal"><svg class="pi"><use href="#i-panel"/></svg>Panel</div>
          <div class="pal"><svg class="pi"><use href="#i-tabbed"/></svg>Tabbed Pane</div>
          <div class="pal"><svg class="pi"><use href="#i-split"/></svg>Split Pane</div>
          <div class="pal"><svg class="pi"><use href="#i-scroll"/></svg>Scroll Pane</div>
          <div class="pal"><svg class="pi"><use href="#i-toolb"/></svg>Tool Bar</div>
          <div class="pal"><svg class="pi"><use href="#i-desk"/></svg>Desktop Pane</div>
          <div class="pal"><svg class="pi"><use href="#i-iframe"/></svg>Internal Frame</div>
          <div class="pal"><svg class="pi"><use href="#i-layer"/></svg>Layered Pane</div>
          <div class="palhead"><svg class="palchev"><use href="#i-down"/></svg>Swing Controls</div>
          <div class="pal"><svg class="pi"><use href="#i-label"/></svg>Label</div>
          <div class="pal"><svg class="pi"><use href="#i-ok"/></svg>Button</div>
          <div class="pal"><svg class="pi"><use href="#i-on"/></svg>Toggle Button</div>
          <div class="pal"><svg class="pi"><use href="#i-check"/></svg>Check Box</div>
          <div class="pal"><svg class="pi"><use href="#i-radio"/></svg>Radio Button</div>
          <div class="pal"><svg class="pi"><use href="#i-group"/></svg>Button Group</div>
          <div class="pal"><svg class="pi"><use href="#i-combo"/></svg>Combo Box</div>
          <div class="pal"><svg class="pi"><use href="#i-list"/></svg>List</div>
          <div class="pal"><svg class="pi"><use href="#i-tf"/></svg>Text Field</div>
          <div class="pal"><svg class="pi"><use href="#i-ta"/></svg>Text Area</div>
          <div class="pal"><svg class="pi"><use href="#i-sbar"/></svg>Scroll Bar</div>
          <div class="pal"><svg class="pi"><use href="#i-slider"/></svg>Slider</div>
          <div class="pal"><svg class="pi"><use href="#i-pbar"/></svg>Progress Bar</div>
          <div class="pal"><svg class="pi"><use href="#i-fmt"/></svg>Formatted Field</div>
          <div class="pal"><svg class="pi"><use href="#i-pwd"/></svg>Password Field</div>
          <div class="pal"><svg class="pi"><use href="#i-spin"/></svg>Spinner</div>
          <div class="pal"><svg class="pi"><use href="#i-sep"/></svg>Separator</div>
          <div class="pal"><svg class="pi"><use href="#i-tp"/></svg>Text Pane</div>
          <div class="pal"><svg class="pi"><use href="#i-ep"/></svg>Editor Pane</div>
          <div class="pal"><svg class="pi"><use href="#i-tree"/></svg>Tree</div>
          <div class="pal"><svg class="pi"><use href="#i-table"/></svg>Table</div>
          <div class="palhead"><svg class="palchev"><use href="#i-right"/></svg>Swing Menus</div>
          <span class="palscroll"></span>
        </div>
      </aside>
    </div>

    <footer class="statusbar">
      <svg class="st-restore" viewBox="0 0 14 14"><rect x="4" y="1" width="9" height="9" fill="none" stroke="#666"/><rect x="1" y="4" width="9" height="9" fill="#f0f0f0" stroke="#666"/></svg>
      <svg class="st-term" viewBox="0 0 16 16"><rect x=".5" y=".5" width="15" height="15" rx="1" fill="#2a2a2a" stroke="#999"/><path d="M3 5l3 2-3 2M7 11h5" stroke="#9fdc6a" fill="none"/></svg>
      <span class="st-text">Terminal - <b>joseph@ubuntu: ~</b></span>
      <svg class="st-note" viewBox="0 0 16 16"><circle cx="8" cy="8" r="6.500" fill="#fff" stroke="#555"/><path d="M4 14l1-3 3 2z" fill="#fff" stroke="#555"/><text x="8" y="11" text-anchor="middle" class="svg-one">1</text></svg>
      <span class="st-div d1"></span><span class="st-div d2"></span><span class="st-div d3"></span>
    </footer>
  </div>
</div>
</body>
</html>
```

FILE: styles.css
```css
* { box-sizing: border-box; }
html, body { margin: 0; padding: 0; }
body {
  width: 1695px; height: 872px; overflow: hidden;
  display: flex; flex-direction: column;
  font: 14.7px "Liberation Sans", Arial, sans-serif;
  color: #151515; background: #f0f0f0;
}
.sprite { position: absolute; width: 0; height: 0; }
svg { display: block; flex: none; }

.svg-q { font: 34px "Noto Sans", sans-serif; fill: #fff; }
.svg-ok { font: 8px "Liberation Sans", sans-serif; fill: #555; }
.svg-lab { font: 7px "Liberation Sans", sans-serif; letter-spacing: -.5px; fill: #333; }
.svg-tx { font: 9px "Liberation Sans", sans-serif; fill: #555; }
.svg-blue { fill: #2a4f9a; }
.svg-t { font: bold 14px "Liberation Serif", serif; fill: #333; }
.svg-one { font: 9px "Liberation Sans", sans-serif; fill: #222; }

/* GNOME top bar */
.topbar {
  height: 22px; flex: none; background: #1b1b1b; color: #eee;
  display: flex; align-items: center; padding-left: 9px;
  font: 14px "Noto Sans", sans-serif; white-space: nowrap;
}
.activities { width: 98px; flex: none; }
.app-hex { width: 14px; height: 16px; margin-right: 7px; }
.appname { width: 137px; flex: none; margin-right: 5px; }
.caret-w { flex: none; border-left: 5px solid transparent; border-right: 5px solid transparent; border-top: 5px solid #eee; }
.clock { margin-left: 569px; width: 87px; flex: none; font-size: 13.500px; }
.tray-dnd { width: 16px; height: 16px; margin-left: 627px; }
.tray-net { width: 16px; height: 14px; margin-left: 28px; }
.tray-vol { width: 16px; height: 16px; margin-left: 13px; }
.tray-pow { width: 15px; height: 15px; margin-left: 12px; }
.caret-end { margin-left: 10px; }

.desktop { flex: 1; display: flex; min-height: 0; }

/* Ubuntu dock */
.dock {
  width: 69px; flex: none; display: flex; flex-direction: column; align-items: center; position: relative;
  background: linear-gradient(180deg, #49202f 0%, #321534 30%, #2b1233 100%);
}
.dock-item { width: 64px; height: 68.330px; flex: none; display: flex; align-items: center; justify-content: center; position: relative; }
.dock-active::before { content: ""; position: absolute; left: 0; top: 2px; width: 64px; height: 64px; border-radius: 6px; background: rgba(255,255,255,.2); }
.dock-dot { position: absolute; left: 0; top: 31px; width: 6px; height: 6px; border-radius: 50%; background: #e95420; }
.dock-fox { width: 46px; height: 46px; }
.dock-ico { width: 44px; height: 44px; position: relative; }
.dock-tall { width: 46px; height: 48px; }
.dock-short { height: 40px; }
.dock-grid {
  margin-top: auto; margin-bottom: 22px; display: grid; gap: 6px;
  grid-template-columns: repeat(3, 6px); grid-auto-rows: 6px;
}
.dock-grid i { background: #eee; border-radius: 1px; }

.window { flex: 1; display: flex; flex-direction: column; min-width: 0; }

/* Title bar */
.titlebar {
  height: 37px; flex: none; background: #2f2d2d; border-bottom: 1px solid #111; position: relative;
  display: flex; align-items: center; justify-content: center;
}
.wintitle { font: bold 12.950px "Noto Sans", sans-serif; color: #eee; margin-right: 10px; }
.win-min { position: absolute; right: 62px; top: 19px; width: 8px; height: 1px; background: #eee; }
.win-max { position: absolute; right: 30px; top: 14px; width: 7px; height: 7px; border: 1px solid #eee; box-shadow: 1px -1px 0 0 #2f2d2d, 2px -2px 0 0 #999; }
.win-close { position: absolute; right: -17px; top: 7px; width: 24px; height: 24px; border-radius: 50%; background: #e95420; }

/* Menus */
.menubar {
  height: 24px; flex: none; background: #fff; display: flex; align-items: center; gap: 15.700px; padding-left: 8px;
}
.menu-team { margin-right: 3px; }
.searchbox { margin-left: auto; height: 24px; width: 252px; flex: none; display: flex; align-items: center; background: #f0f0f0; padding-left: 3px; }
.search-ico { width: 16px; height: 16px; }
.search-input { margin-left: 3px; flex: 1; height: 18px; background: #fff; border-left: 1px solid #111; }
.caret-d { display: inline-block; flex: none; width: 8px; height: 4px; border-left: 4px solid transparent; border-right: 4px solid transparent; border-top: 4px solid #444; }
.caret-light { border-top-color: #bbb; }

/* Main toolbar */
.toolbar { height: 42px; flex: none; background: #f0f0f0; display: flex; align-items: center; padding: 0 0 0 8px; }
.toolbar > * { position: relative; top: -1px; }
.grip { width: 2px; height: 18px; background-image: linear-gradient(#bbb 50%, transparent 50%); background-size: 2px 3px; flex: none; }
.tb { width: 24px; height: 24px; }
.m7 { margin-right: 7px; } .m8 { margin-right: 8px; } .m9 { margin-right: 9px; } .m10 { margin-right: 10px; }
.m11 { margin-right: 11px; } .m12 { margin-right: 12px; } .m14 { margin-right: 14px; } .m17 { margin-right: 17px; } .m30 { margin-right: 30px; }
.l2 { margin-left: 2px; } .l5 { margin-left: 5px; }
.combo {
  width: 139px; height: 24px; flex: none; background: #fff; border: 1px solid #c4c4c4; border-radius: 2px;
  display: flex; align-items: center; justify-content: space-between; padding: 0 2px 0 6px;
}
.combo-arrow { width: 16px; height: 16px; }
.memory { width: 101px; height: 24px; position: relative; display: flex; align-items: center; flex: none; font-size: 14.300px; color: #222; white-space: nowrap; }
.mem-bar { position: absolute; right: 0; top: 3px; width: 10px; height: 21px; background: #3a8ee6; }
.mem-text { position: relative; }
.nbprof { position: relative; width: 24px; height: 24px; flex: none; }
.nbbadge { position: absolute; right: -3px; bottom: -2px; width: 13px; height: 13px; }

/* Workspace */
.workspace { flex: 1; min-height: 0; display: flex; gap: 4px; padding: 0 4px; }
.leftcol { width: 220px; flex: none; display: flex; flex-direction: column; }
.centercol { flex: 1; min-width: 0; display: flex; flex-direction: column; }
.rightcol { width: 156px; flex: none; display: flex; flex-direction: column; }

.tabstrip { height: 31px; flex: none; display: flex; align-items: stretch; position: relative; }
.strip-low { height: 28px; margin-top: 5px; }
.tab { display: flex; align-items: center; border-bottom: 3px solid transparent; padding-top: 3px; white-space: nowrap; margin-bottom: -1px; position: relative; z-index: 1; }
.tab.sel { border-bottom-color: #9aa9c0; }
.x { width: 9px; height: 9px; flex: none; }
.tab-proj { width: 63px; padding-left: 1px; border-right: 1px solid #c8c8c8; }
.tab-proj .x { margin-left: 8px; }
.tab-serv { width: 63px; padding-left: 3px; border-right: 1px solid #c8c8c8; }
.tab-files { width: 58px; padding-left: 13px; border-right: 1px solid #c8c8c8; }
.tab-other { width: 184px; padding-left: 1px; border-right: 1px solid #c8c8c8; padding-top: 0; }
.other-label { letter-spacing: .16px; }
.tab-other .x { margin-left: 5px; }
.tab-pal { width: 72px; padding-left: 6px; border-right: 1px solid #c8c8c8; }
.pal-label { flex: none; width: 46px; }
.pal-close { flex: none; font-size: 17px; line-height: 1; color: #666; margin-left: 3px; }
.minimize { width: 10px; height: 1px; background: #555; margin-left: auto; margin-right: 8px; align-self: center; position: relative; top: 5px; }
.tab-editor { background: #fff; width: 156px; padding-left: 7px; margin-top: 2px; padding-top: 1px; }
.ico-tab { width: 15px; height: 16px; margin-right: 4px; }
.tab-editor .x { margin-left: 7px; }
.tabnav { margin-left: auto; display: flex; align-items: center; padding: 0 6px 0 0; }
.nav-s { width: 10px; height: 14px; margin-right: 5px; }
.nav-r { margin-right: 8px; }
.nav-v { margin-right: 7px; }
.nav-box { width: 10px; height: 10px; border: 1px solid #555; margin-left: 3px; }

.treebox { background: #fff; border: 1px solid #bdbdbd; position: relative; overflow: hidden; }
.tree-top { height: 330px; flex: none; }
.tree-bottom { flex: 1; margin-bottom: 1px; }
.row { height: 20px; display: flex; align-items: center; padding-left: 1px; white-space: nowrap; }
.row.hl { background: #d2d2d2; }
.l-1 { padding-left: 19px; } .l-2 { padding-left: 37px; } .l-3 { padding-left: 55px; }
.chev { width: 14px; height: 14px; margin-right: 5px; flex: none; display: block; }
.ico { width: 18px; height: 17px; margin-right: 5px; }
.row-form { padding-left: 3px; }
.ico-form { width: 16px; height: 16px; margin-right: 6px; }
.tooltip {
  position: absolute; left: 3px; top: 294px; width: 153px; height: 29px; border-radius: 8px;
  background: #2b2b2b; color: #eee; font: 14px "Noto Sans", sans-serif;
  display: flex; align-items: center; justify-content: center;
}

/* Editor */
.editor { flex: 1; min-height: 0; border: 2px solid #bdbdbd; display: flex; flex-direction: column; margin-bottom: 1px; }
.edit-bar { height: 25px; flex: none; background: #f0f0f0; border-bottom: 2px solid #bdbdbd; display: flex; align-items: center; padding-left: 10px; }
.view { white-space: nowrap; }
.v-design { background: #cfcfcf; border-radius: 3px; width: 64px; height: 21px; display: flex; align-items: center; justify-content: center; margin: 0 12px 0 11px; }
.ebsep { width: 1px; height: 20px; background: #bdbdbd; margin: 0 11px 0 18px; }
.sep2 { margin: 0 8px 0 8px; }
.sep3 { margin: 0 7px 0 5px; }
.ebi { width: 18px; height: 18px; margin-right: 3px; }
.ebi-gap { margin-left: 5px; margin-right: 0; }
.ebi-gap2 { margin-right: 0; }
.ebi-last { width: 12px; height: 12px; margin: 0 4px 0 auto; }
.dim { opacity: .9; }

.canvas { flex: 1; min-height: 0; background: #fff; padding: 12px 0 0 12px; }
.form { width: 741px; height: 626px; border: 4px solid #e0e0fa; }
.form-inner { position: relative; width: 100%; height: 100%; background: #333; color: #f0f0f0; font-size: 18px; }
.form-title { position: absolute; left: 241px; top: 18px; font-size: 35.600px; line-height: 42px; white-space: nowrap; }
.fbtn { position: absolute; display: flex; align-items: center; border: 1px solid #b5b5b5; border-radius: 3px; white-space: nowrap; }
.b-run  { left: 254px; top: 103px; width: 191px; height: 59px; padding-left: 13px; }
.b-kill { left: 260px; top: 191px; width: 185px; height: 63px; padding-left: 14px; }
.b-all  { left: 249px; top: 280px; width: 231px; height: 63px; padding-left: 18px; }
.b-user { left: 246px; top: 372px; width: 241px; height: 62px; padding-left: 18px; }
.b-send { left: 258px; top: 470px; width: 203px; height: 63px; padding-left: 14px; }
.b-exit { left: 607px; top: 546px; width: 106px; height: 49px; padding-left: 14px; }
.fi-run { width: 56px; height: 52px; margin-right: 3px; }
.fi-skull { width: 57px; height: 57px; margin-right: 4px; }
.fi-note { width: 49px; height: 51px; margin-right: 8px; }
.fi-note2 { margin-right: 9px; }
.fi-plane { width: 57px; height: 54px; margin-right: 4px; }
.fi-exit { width: 43px; height: 44px; margin-right: 4px; }

/* Palette */
.palette { flex: 1; margin-bottom: 1px; background: #f2f2f2; border: 1px solid #bdbdbd; position: relative; overflow: hidden; }
.palhead { height: 19px; width: 144px; background: #d9d9d9; font-weight: bold; display: flex; align-items: center; white-space: nowrap; padding-left: 2px; }
.palchev { width: 14px; height: 14px; margin-right: 2px; }
.pal { height: 22px; display: flex; align-items: center; padding-left: 3px; white-space: nowrap; }
.pi { width: 16px; height: 16px; margin-right: 4px; }
.palscroll { position: absolute; left: 146px; top: 2px; width: 6px; height: 612px; background: #d8d8d8; border-radius: 3px; }

/* Status bar */
.statusbar { height: 25px; flex: none; background: #f0f0f0; display: flex; align-items: center; padding-left: 9px; position: relative; font-size: 14.900px; }
.st-restore { width: 11px; height: 11px; }
.st-term { width: 16px; height: 16px; margin-left: 16px; }
.st-text { margin-left: 4px; white-space: nowrap; }
.st-note { width: 16px; height: 16px; position: absolute; left: 1324px; top: 4px; }
.st-div { position: absolute; top: 2px; width: 1px; height: 20px; background: #cfcfcf; }
.d1 { left: 1345px; } .d2 { left: 1489px; } .d3 { left: 1523px; }
```
